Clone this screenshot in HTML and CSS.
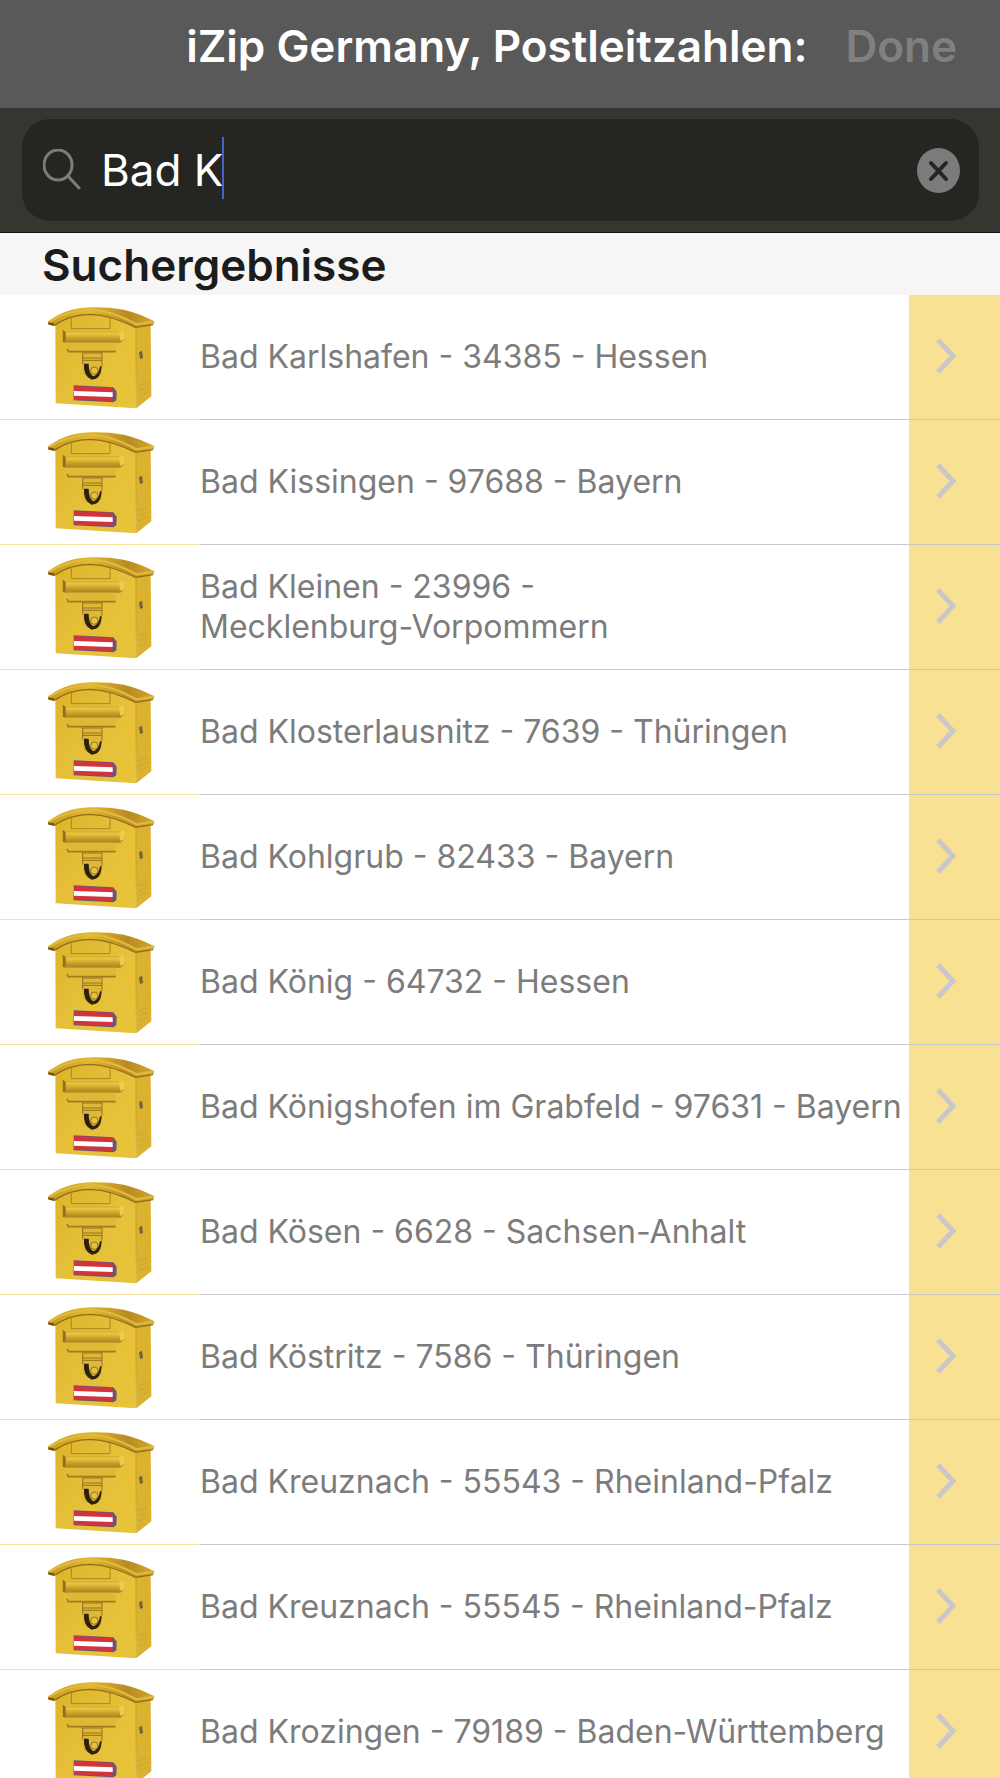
FILE: index.html
```
<!DOCTYPE html>
<html lang="de">
<head>
  <meta charset="UTF-8">
  <meta name="viewport" content="width=device-width, initial-scale=1.0">
  <title>iZip Germany</title>
  <link rel="stylesheet" href="styles.css">
</head>
<body>
    <!-- shared icons -->
    <svg class="sprite" aria-hidden="true">
        <defs>
            <linearGradient id="front" x1="0" y1="0" x2="1" y2="1">
                <stop offset="0" stop-color="#dcb42c"/>
                <stop offset="0.5" stop-color="#e5c038"/>
                <stop offset="1" stop-color="#e8c43a"/>
            </linearGradient>
            <linearGradient id="roof" x1="0" y1="0" x2="1" y2="0">
                <stop offset="0" stop-color="#c89a20"/>
                <stop offset="0.4" stop-color="#e2b92f"/>
                <stop offset="0.75" stop-color="#b98a22"/>
                <stop offset="1" stop-color="#d3a72b"/>
            </linearGradient>
            <linearGradient id="flap" x1="0" y1="0" x2="0" y2="1">
                <stop offset="0" stop-color="#c39a22"/>
                <stop offset="0.3" stop-color="#e8c640"/>
                <stop offset="0.65" stop-color="#c9a029"/>
                <stop offset="1" stop-color="#a98120"/>
            </linearGradient>
        </defs>
        <symbol id="mailbox" viewBox="50 30 324 312">
            <path d="M75 84 Q120 50 180 48 Q260 52 318 94 L316 340 L76 325 Z" fill="url(#front)"/>
            <path d="M316 94 L361 90 L363 304 L318 340 Z" fill="#dab230"/>
            <path d="M317 96 V338" stroke="#c79c22" stroke-width="2"/>
            <path d="M52 82 Q100 40 180 37 Q230 35 280 44 Q330 56 372 79 L370 88 L318 97 Q240 58 180 58 Q120 58 70 92 L54 88 Z" fill="url(#roof)"/>
            <path d="M54 82 Q110 46 180 44 Q240 46 318 88 L370 80" fill="none" stroke="#dfba3c" stroke-width="7"/>
            <path d="M70 92 Q120 58 180 58 Q240 60 316 97 L368 89" fill="none" stroke="#8f6c1c" stroke-width="4"/>
            <path d="M53 82 L72 85 L70 92 L55 89 Z" fill="#765411"/>
            <path d="M123 67 V101 H239 V68" fill="none" stroke="#a98423" stroke-width="3"/>
            <path d="M97 104 L106 109 H270 L282 104 V133 L270 143 H104 L97 140 Z" fill="url(#flap)"/>
            <path d="M97 104 L106 112 V138 L98 142 Z" fill="#936f1c"/>
            <path d="M266 110 L282 104 V132 L270 138 Z" fill="#ebcc4d"/>
            <path d="M108 143 H258 L256 168 H112 Z" fill="#dfb836"/>
            <path d="M110 162 L114 170 H256" fill="none" stroke="#a17b1e" stroke-width="5"/>
            <path d="M156 173 H215 V238 L200 250 H172 L156 238 Z" fill="#dfb936"/>
            <path d="M156 174 H216 M156 189 H215 M156 196 H215 M157 173 V208 M215 173 V212" fill="none" stroke="#937022" stroke-width="3"/>
            <circle cx="192" cy="227" r="11" fill="#e5c141" stroke="#977118" stroke-width="3"/>
            <path d="M161 206 Q158 242 184 254 Q212 254 214 214 L209 214 Q205 242 188 244 Q175 234 175 206 Z" fill="#2b210c"/>
            <path d="M130 271 L249 277 L259 290 L258 316 L249 322 L130 316 Z" fill="#6a547c"/>
            <path d="M132 273 L247 279 L246 319 L130 313 Z" fill="#d3343c"/>
            <path d="M131 288 L247 292 V306 L131 302 Z" fill="#fff"/>
            <path d="M326 172 L335 167 L338 189 L329 192 Z" fill="#766434"/>
            <path d="M323 272 L350 264 M323 288 L352 277 M323 304 L352 291" stroke="#c79f2b" stroke-width="2"/>
        </symbol>
        <symbol id="chevron" viewBox="0 0 22 38">
            <path d="M3 2 L18 18 L3 34" fill="none" stroke="#c7c7cc" stroke-width="5"/>
        </symbol>
    </svg>

    <div class="app">
        <header class="nav-bar">
            <h1>iZip Germany, Postleitzahlen:</h1>
            <button type="button" disabled>Done</button>
        </header>

        <form class="search-bar">
            <div class="search-field">
                <svg class="search-icon" viewBox="0 0 38 42" aria-hidden="true">
                    <ellipse cx="15" cy="16" rx="14" ry="15"/>
                    <path d="M25 27 L36 39"/>
                </svg>
                <input type="text" aria-label="Suche" value="Bad K">
                <span class="caret"></span>
                <button type="reset" class="clear-btn" aria-label="Löschen">
                    <svg viewBox="0 0 43 45"><path d="M14 15 L29 31 M29 15 L14 31"/></svg>
                </button>
            </div>
        </form>

        <main class="results">
            <h2>Suchergebnisse</h2>
            <ul>
                <li><a href="#"><svg class="thumb"><use href="#mailbox"/></svg><span class="place">Bad Karlshafen - 34385 - Hessen</span><span class="accessory"><svg><use href="#chevron"/></svg></span></a></li>
                <li><a href="#"><svg class="thumb"><use href="#mailbox"/></svg><span class="place">Bad Kissingen - 97688 - Bayern</span><span class="accessory"><svg><use href="#chevron"/></svg></span></a></li>
                <li><a href="#"><svg class="thumb"><use href="#mailbox"/></svg><span class="place">Bad Kleinen - 23996 -<br>Mecklenburg-Vorpommern</span><span class="accessory"><svg><use href="#chevron"/></svg></span></a></li>
                <li><a href="#"><svg class="thumb"><use href="#mailbox"/></svg><span class="place">Bad Klosterlausnitz - 7639 - Thüringen</span><span class="accessory"><svg><use href="#chevron"/></svg></span></a></li>
                <li><a href="#"><svg class="thumb"><use href="#mailbox"/></svg><span class="place">Bad Kohlgrub - 82433 - Bayern</span><span class="accessory"><svg><use href="#chevron"/></svg></span></a></li>
                <li><a href="#"><svg class="thumb"><use href="#mailbox"/></svg><span class="place">Bad König - 64732 - Hessen</span><span class="accessory"><svg><use href="#chevron"/></svg></span></a></li>
                <li><a href="#"><svg class="thumb"><use href="#mailbox"/></svg><span class="place">Bad Königshofen im Grabfeld - 97631 - Bayern</span><span class="accessory"><svg><use href="#chevron"/></svg></span></a></li>
                <li><a href="#"><svg class="thumb"><use href="#mailbox"/></svg><span class="place">Bad Kösen - 6628 - Sachsen-Anhalt</span><span class="accessory"><svg><use href="#chevron"/></svg></span></a></li>
                <li><a href="#"><svg class="thumb"><use href="#mailbox"/></svg><span class="place">Bad Köstritz - 7586 - Thüringen</span><span class="accessory"><svg><use href="#chevron"/></svg></span></a></li>
                <li><a href="#"><svg class="thumb"><use href="#mailbox"/></svg><span class="place">Bad Kreuznach - 55543 - Rheinland-Pfalz</span><span class="accessory"><svg><use href="#chevron"/></svg></span></a></li>
                <li><a href="#"><svg class="thumb"><use href="#mailbox"/></svg><span class="place">Bad Kreuznach - 55545 - Rheinland-Pfalz</span><span class="accessory"><svg><use href="#chevron"/></svg></span></a></li>
                <li><a href="#"><svg class="thumb"><use href="#mailbox"/></svg><span class="place">Bad Krozingen - 79189 - Baden-Württemberg</span><span class="accessory"><svg><use href="#chevron"/></svg></span></a></li>
            </ul>
        </main>
    </div>
</body>
</html>
```
FILE: styles.css
```
* {
    box-sizing: border-box;
}
body {
    margin: 0;
    font-family: Inter, Roboto, sans-serif;
    background-color: #fff;
}
.sprite {
    position: absolute;
    width: 0;
    height: 0;
}
.app {
    display: flex;
    flex-direction: column;
    height: 100vh;
    overflow: hidden;
}
.nav-bar {
    display: flex;
    flex-shrink: 0;
    justify-content: flex-end;
    align-items: flex-start;
    gap: 38px;
    padding: 16px 43px 32px;
    background-color: #595959;
}
.nav-bar h1, .nav-bar button {
    margin: 0;
    padding: 0;
    font-size: 44px;
    font-weight: 600;
    line-height: 60px;
    white-space: nowrap;
}
.nav-bar h1 {
    color: #fff;
}
.nav-bar button {
    border: none;
    background: none;
    color: #808080;
    font-family: inherit;
}
.search-bar {
    flex-shrink: 0;
    padding: 11px 21px 11px 22px;
    background-color: #363631;
    border-bottom: 1px solid #111;
}
.search-field {
    display: flex;
    align-items: center;
    position: relative;
    height: 102px;
    padding: 0 19px 0 21px;
    border-radius: 28px;
    background-color: #252621;
}
.search-icon {
    width: 38px;
    height: 42px;
    fill: none;
    stroke: #7c7c79;
    stroke-width: 3;
    stroke-linecap: round;
}
.search-field input {
    flex: 1;
    min-width: 0;
    padding: 0 20px;
    border: none;
    outline: none;
    background: none;
    color: #fff;
    font-family: inherit;
    font-size: 44px;
    line-height: 60px;
}
/* text cursor right after the typed value */
.caret {
    position: absolute;
    left: 200px;
    top: 18px;
    width: 2px;
    height: 62px;
    background-color: #4a62c8;
}
.clear-btn {
    flex-shrink: 0;
    width: 43px;
    height: 45px;
    padding: 0;
    border: none;
    border-radius: 50%;
    background-color: #7b7b7b;
    cursor: pointer;
}
.clear-btn svg {
    display: block;
    width: 43px;
    height: 45px;
    fill: none;
    stroke: #252621;
    stroke-width: 4;
    stroke-linecap: round;
}
.results {
    flex: 1;
    min-height: 0;
    overflow-y: auto;
    scrollbar-width: none;
}
.results h2 {
    margin: 0;
    padding: 2px 42px 0;
    background-color: #f6f6f6;
    color: #1c1c1c;
    font-size: 44px;
    font-weight: 600;
    line-height: 60px;
}
.results ul {
    margin: 0;
    padding: 0;
    list-style: none;
}
.results a {
    display: flex;
    height: 125px;
    color: #7c7c7c;
    text-decoration: none;
}
.thumb {
    box-sizing: content-box;
    flex-shrink: 0;
    width: 108px;
    height: 104px;
    padding: 10px 45px 10px 47px;
    border-bottom: 1px solid #f9e3a0;
}
.place {
    flex: 1;
    align-self: stretch;
    display: grid;
    align-content: center;
    border-bottom: 1px solid #c8c7cc;
    font-size: 32px;
    line-height: 40px;
    white-space: nowrap;
}
.accessory {
    flex-shrink: 0;
    display: flex;
    align-items: center;
    width: 91px;
    padding-left: 26px;
    background-color: #f9e193;
    border-bottom: 1px solid #c8c7cc;
}
.accessory svg {
    width: 22px;
    height: 38px;
}
```
